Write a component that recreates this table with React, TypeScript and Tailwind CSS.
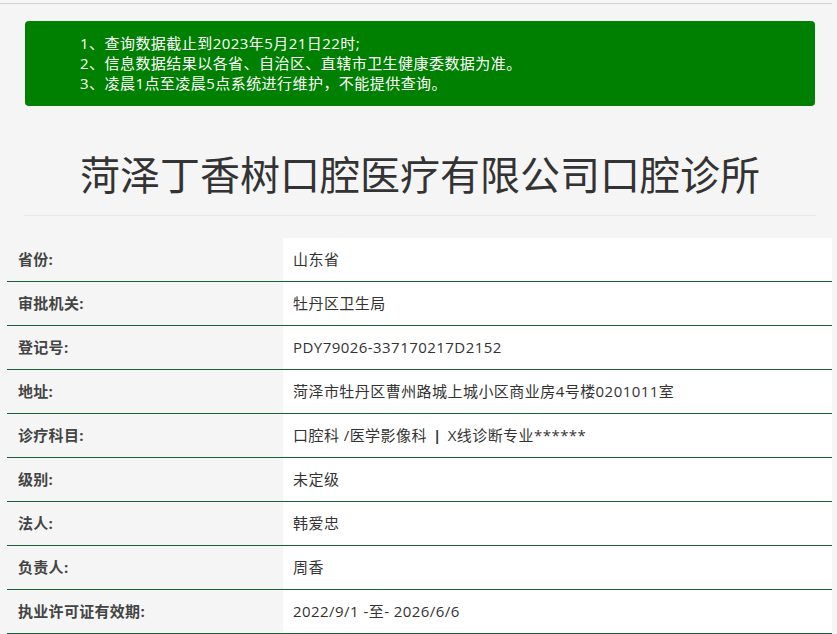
import React from 'react'

const rows: { label: string; value: React.ReactNode }[] = [
  { label: '省份:', value: '山东省' },
  { label: '审批机关:', value: '牡丹区卫生局' },
  { label: '登记号:', value: 'PDY79026-337170217D2152' },
  { label: '地址:', value: '菏泽市牡丹区曹州路城上城小区商业房4号楼0201011室' },
  {
    label: '诊疗科目:',
    value: (
      <>
        口腔科 /医学影像科 <span className="font-bold px-[6px]">|</span> X线诊断专业******
      </>
    ),
  },
  { label: '级别:', value: '未定级' },
  { label: '法人:', value: '韩爱忠' },
  { label: '负责人:', value: '周香' },
  { label: '执业许可证有效期:', value: '2022/9/1 -至- 2026/6/6' },
]

export default function App() {
  return (
    <div
      className="min-h-screen bg-[#f5f5f5] pt-[3px]"
      style={{ fontFamily: '"Open Sans", "Noto Sans CJK SC", sans-serif' }}
    >
      <div className="w-[832px] border-t border-[#d4d4d4]">
        {/* Notice + title */}
        <div className="ml-[24px] w-[792px] pt-[17px]">
          <div className="ml-px w-[790px] rounded-[4px] bg-[#008000] pl-[55px] pt-[12px] pb-[13px] text-[15px] leading-[20px] tracking-[0.45px] text-white">
            <p>1、查询数据截止到2023年5月21日22时;</p>
            <p>2、信息数据结果以各省、自治区、直辖市卫生健康委数据为准。</p>
            <p>3、凌晨1点至凌晨5点系统进行维护，不能提供查询。</p>
          </div>

          <h1 className="mt-[47px] text-center text-[40px] leading-[44px] font-normal text-[#333]">
            菏泽丁香树口腔医疗有限公司口腔诊所
          </h1>

          <div className="mt-[18px] border-t border-[#e8e8e8]" />
        </div>

        {/* Info table */}
        <div className="ml-[7px] mt-[22px]">
          {rows.map((r) => (
            <div key={r.label} className="flex h-[44px] border-b border-[#17603a]">
              <div className="flex w-[276px] items-center pl-[11px] text-[15px] font-bold tracking-[0.3px] text-[#444]">
                {r.label}
              </div>
              <div className="flex flex-1 items-center bg-white pl-[10px] text-[15px] tracking-[0.45px] text-[#333]">
                {r.value}
              </div>
            </div>
          ))}
        </div>
      </div>
    </div>
  )
}
